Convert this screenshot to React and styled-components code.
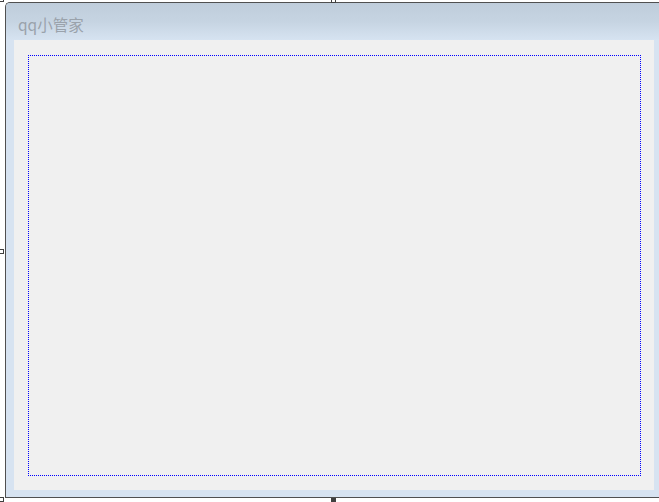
import React from "react";
import styled, { createGlobalStyle } from "styled-components";

const Global = createGlobalStyle`
  html, body { margin: 0; padding: 0; background: #ffffff; overflow: hidden; }
  #root { width: 659px; height: 502px; }
`;

const Canvas = styled.div`
  position: relative;
  width: 659px;
  height: 502px;
  overflow: hidden;
  background: #ffffff;
  padding: 2px 0 0 5px;
  box-sizing: border-box;
`;

const Window = styled.div`
  width: 670px;
  height: 496px;
  box-sizing: border-box;
  border: 1px solid #505050;
  border-right: none;
  border-top-left-radius: 5px;
  background: #d7e3f1;
  display: flex;
  flex-direction: column;
  overflow: hidden;
`;

const TitleBar = styled.div`
  height: 37px;
  flex: none;
  background: linear-gradient(to bottom, #bfcddb 0%, #c6d4e2 50%, #d6e3f1 100%);
  display: flex;
  align-items: center;
  padding: 5px 0 0 12px;
  box-sizing: border-box;
`;

const Title = styled.span`
  font-family: "Noto Sans CJK SC", "Noto Sans", sans-serif;
  font-size: 15.5px;
  font-weight: 400;
  color: #9aa2ab;
`;

const Body = styled.div`
  flex: 1;
  display: flex;
  padding: 0 16px 7px 8px;
`;

const Client = styled.div`
  width: 640px;
  flex: none;
  background: #f0f0f0;
  padding: 15px 13px 14px 14px;
  box-sizing: border-box;
  display: flex;
`;

const hDot = "linear-gradient(to right, #0000ff 50%, rgba(0,0,0,0) 50%)";
const vDot = "linear-gradient(to bottom, #0000ff 50%, rgba(0,0,0,0) 50%)";

const Frame = styled.div`
  flex: 1;
  background-image: ${hDot}, ${hDot}, ${vDot}, ${vDot};
  background-size: 2px 1px, 2px 1px, 1px 2px, 1px 2px;
  background-position: left top, left bottom, left top, right top;
  background-repeat: repeat-x, repeat-x, repeat-y, repeat-y;
`;

const Handle = styled.div`
  position: absolute;
  width: 5px;
  height: 5px;
  box-sizing: border-box;
  border: 1px solid #404040;
  background: ${(p) => (p.$filled ? "#404040" : "#ffffff")};
`;

export default function App() {
  return (
    <>
      <Global />
      <Canvas>
        <Window>
          <TitleBar>
            <Title>qq小管家</Title>
          </TitleBar>
          <Body>
            <Client>
              <Frame />
            </Client>
          </Body>
        </Window>
        <Handle style={{ left: -1, top: -3 }} />
        <Handle style={{ left: 331, top: -2 }} />
        <Handle style={{ left: -1, top: 249 }} />
        <Handle style={{ left: -1, top: 497 }} />
        <Handle $filled style={{ left: 331, top: 498 }} />
      </Canvas>
    </>
  );
}
